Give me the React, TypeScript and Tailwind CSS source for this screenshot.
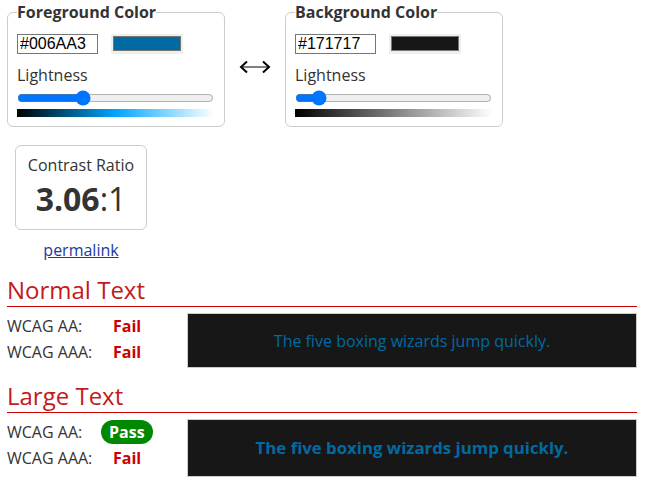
import React from "react";

type PickerProps = {
  title: string;
  hex: string;
  lightness: number;
  gradient: string;
};

const ColorPicker = ({ title, hex, lightness, gradient }: PickerProps) => {
  return (
    <fieldset className="w-[218px] rounded-md border border-[#ccc] pl-[9px] pr-[9px] pb-[9px]">
      <legend className="text-base font-bold leading-6 text-[#333]">{title}</legend>
      <div className="mt-[10px] flex items-center gap-[13px]">
        <input
          type="text"
          defaultValue={hex}
          className="h-5 w-[81px] border border-[#767676] px-[2px] text-base leading-[18px] text-black [font-family:'Liberation_Sans',Arial,sans-serif]"
        />
        <div className="h-5 w-[72px] bg-[#efefef] p-[2px]">
          <div className="h-[15px] w-full border border-[#777]" style={{ backgroundColor: hex }} />
        </div>
      </div>
      <div className="mt-[9px] leading-6 text-[#333]">Lightness</div>
      <input
        type="range"
        min={0}
        max={100}
        defaultValue={lightness}
        className="m-0 mt-[3px] block h-4 w-[197px]"
      />
      <div className="mt-[3px] h-2 w-[197px]" style={{ background: gradient }} />
    </fieldset>
  );
};

const SwapArrow = () => (
  <svg width="32" height="14" viewBox="0 0 32 14" aria-label="swap colors">
    <line x1="3" y1="7" x2="29" y2="7" stroke="#555" strokeWidth="1.5" />
    <path d="M8 1.5 L2 7 L8 12.5" fill="none" stroke="#000" strokeWidth="2" strokeLinejoin="miter" />
    <path d="M24 1.5 L30 7 L24 12.5" fill="none" stroke="#000" strokeWidth="2" strokeLinejoin="miter" />
  </svg>
);

const Result = ({ pass }: { pass: boolean }) =>
  pass ? (
    <span className="rounded-full bg-[#080] px-2 leading-6 font-bold text-white">Pass</span>
  ) : (
    <span className="pl-3 font-bold text-[#c00]">Fail</span>
  );

type SectionProps = {
  title: string;
  aa: boolean;
  aaa: boolean;
  large?: boolean;
};

const Section = ({ title, aa, aaa, large }: SectionProps) => {
  return (
    <section>
      <h2 className="border-b border-[#c00] text-2xl leading-8 text-[#c41a1a]">{title}</h2>
      <div className="mt-[6px] flex">
        <div className="w-[180px] shrink-0">
          <div className="flex h-[26px] items-center">
            <span className="w-[94px]">WCAG AA:</span>
            <Result pass={aa} />
          </div>
          <div className="flex h-[26px] items-center">
            <span className="w-[94px]">WCAG AAA:</span>
            <Result pass={aaa} />
          </div>
        </div>
        <div
          className={
            large
              ? "flex h-[58px] flex-1 items-center justify-center border border-[#ccc] bg-[#171717] text-[16.8px] font-bold text-[#006AA3]"
              : "flex h-[55px] flex-1 items-center justify-center border border-[#ccc] bg-[#171717] text-base text-[#006AA3]"
          }
        >
          The five boxing wizards jump quickly.
        </div>
      </div>
    </section>
  );
};

export default function App() {
  return (
    <div className="w-[647px] px-[7px] pr-[10px] text-base leading-6 text-[#333] [font-family:'Open_Sans',sans-serif]">
      <div className="flex items-center">
        <ColorPicker
          title="Foreground Color"
          hex="#006AA3"
          lightness={32}
          gradient="linear-gradient(to right, #000, hsl(201,100%,50%), #fff)"
        />
        <div className="flex w-[60px] justify-center pt-[6px]">
          <SwapArrow />
        </div>
        <ColorPicker
          title="Background Color"
          hex="#171717"
          lightness={9}
          gradient="linear-gradient(to right, #000, hsl(0,0%,50%), #fff)"
        />
      </div>

      <div className="ml-2 mt-[18px] w-[132px]">
        <div className="rounded-md border border-[#ccc] pb-[10px] pt-[7px] text-center">
          <div className="leading-6">Contrast Ratio</div>
          <div className="mt-[2px] text-[32px] leading-10">
            <b>3.06</b>:1
          </div>
        </div>
        <div className="mt-[8px] text-center">
          <a href="#" className="text-[#1a3a9c] underline">
            permalink
          </a>
        </div>
      </div>

      <div className="mt-[12px]">
        <Section title="Normal Text" aa={false} aaa={false} />
      </div>
      <div className="mt-[12px]">
        <Section title="Large Text" aa={true} aaa={false} large />
      </div>
    </div>
  );
}
